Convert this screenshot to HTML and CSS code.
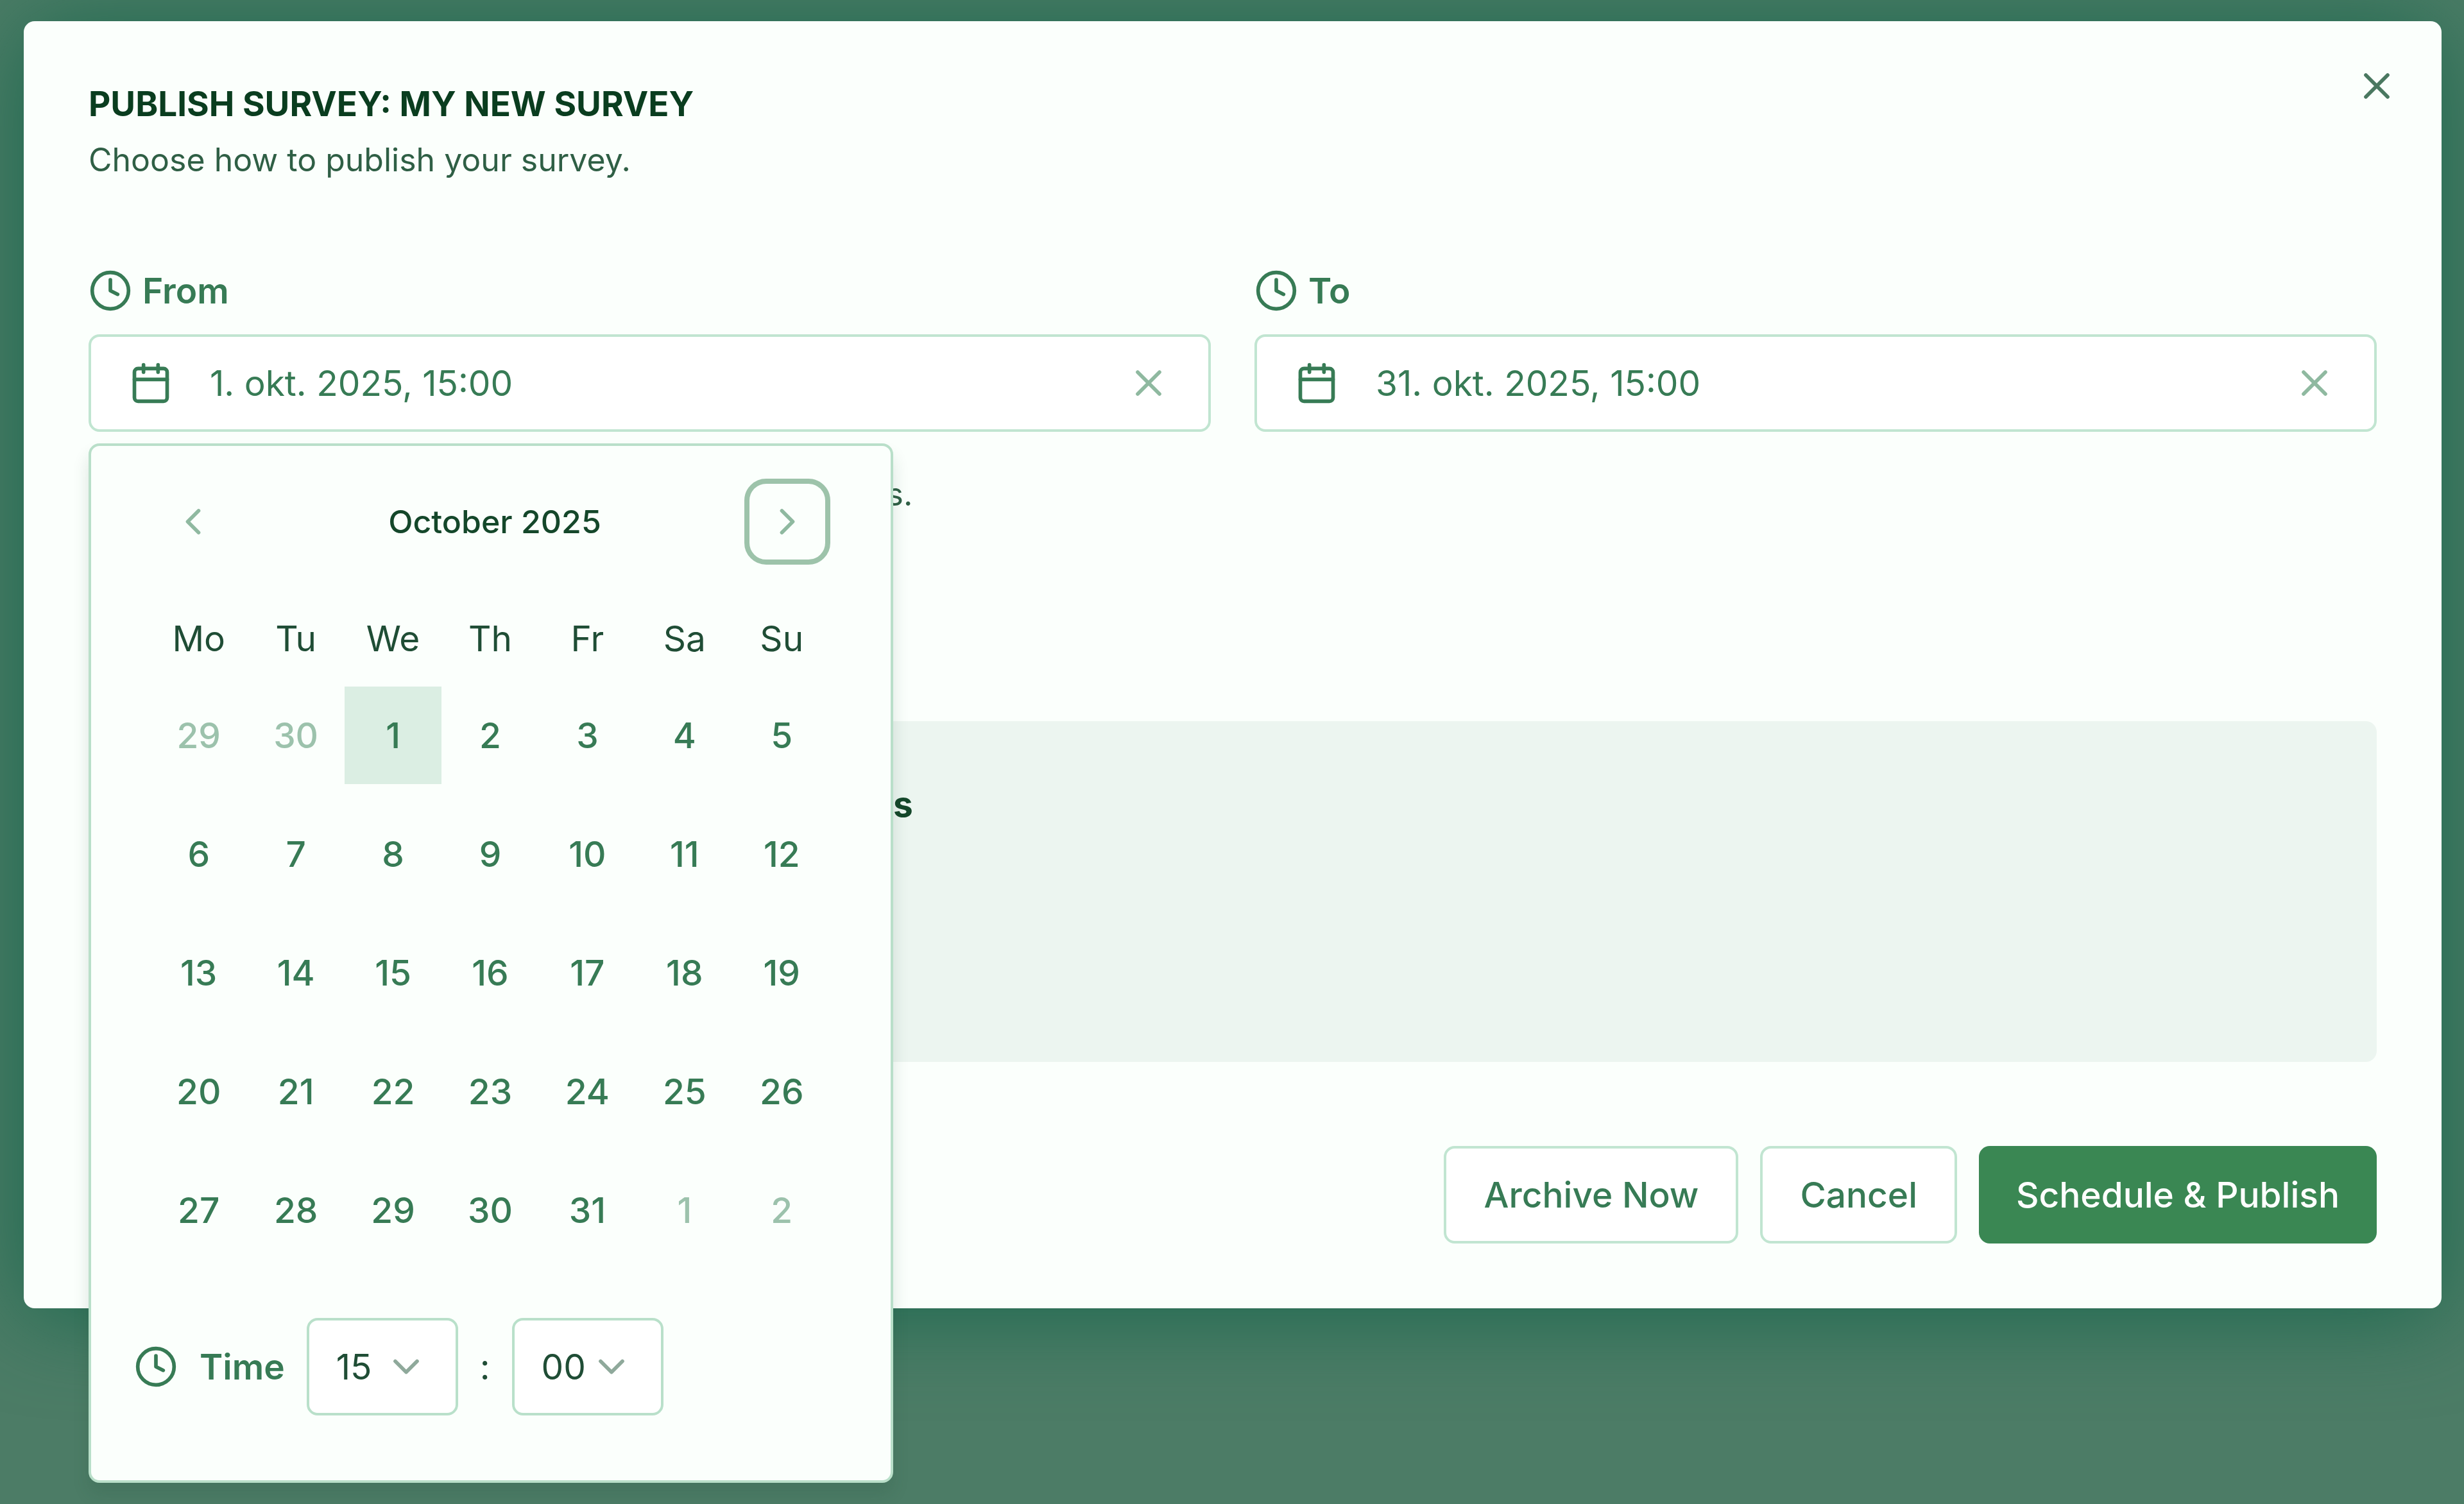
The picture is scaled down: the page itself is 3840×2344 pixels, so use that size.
FILE: index.html
```html
<!DOCTYPE html>
<html lang="en">
<head>
	<meta charset="UTF-8">
	<title>Publish survey</title>
	<link rel="stylesheet" href="styles.css">
</head>
<body>
<!-- shared icons -->
<svg class="sprite" aria-hidden="true">
	<symbol id="clock" viewBox="0 0 24 24"><circle cx="12" cy="12" r="10"/><path d="M12 6v6l4 2"/></symbol>
	<symbol id="calendar" viewBox="0 0 24 24"><path d="M8 2v4M16 2v4M3 10h18"/><rect x="3" y="4" width="18" height="18" rx="2"/></symbol>
	<symbol id="close" viewBox="0 0 24 24"><path d="M18 6 6 18M6 6l12 12"/></symbol>
	<symbol id="left" viewBox="0 0 24 24"><path d="m15 18-6-6 6-6"/></symbol>
	<symbol id="right" viewBox="0 0 24 24"><path d="m9 18 6-6-6-6"/></symbol>
	<symbol id="down" viewBox="0 0 24 24"><path d="m6 9 6 6 6-6"/></symbol>
</svg>

<div class="modal" role="dialog" aria-labelledby="modal-title">
	<button class="modal-close" aria-label="Close"><svg class="icon"><use href="#close"/></svg></button>

	<div class="modal-header">
		<h2 id="modal-title">PUBLISH SURVEY: MY NEW SURVEY</h2>
		<p>Choose how to publish your survey.</p>
	</div>

	<div class="range">
		<div class="field">
			<label for="from"><svg class="icon"><use href="#clock"/></svg>From</label>
			<div class="date-box">
				<svg class="icon"><use href="#calendar"/></svg>
				<input type="text" id="from" value="1. okt. 2025, 15:00">
				<button class="clear" aria-label="Clear from"><svg class="icon"><use href="#close"/></svg></button>
			</div>

			<!-- date picker -->
			<div class="picker">
				<div class="picker-nav">
					<button class="prev" aria-label="Previous month"><svg class="icon"><use href="#left"/></svg></button>
					<span class="month">October 2025</span>
					<button class="next" aria-label="Next month"><svg class="icon"><use href="#right"/></svg></button>
				</div>
				<table class="days">
					<thead>
					<tr><th>Mo</th><th>Tu</th><th>We</th><th>Th</th><th>Fr</th><th>Sa</th><th>Su</th></tr>
					</thead>
					<tbody>
					<tr>
						<td><button class="outside">29</button></td>
						<td><button class="outside">30</button></td>
						<td><button class="selected">1</button></td>
						<td><button>2</button></td>
						<td><button>3</button></td>
						<td><button>4</button></td>
						<td><button>5</button></td>
					</tr>
					<tr>
						<td><button>6</button></td>
						<td><button>7</button></td>
						<td><button>8</button></td>
						<td><button>9</button></td>
						<td><button>10</button></td>
						<td><button>11</button></td>
						<td><button>12</button></td>
					</tr>
					<tr>
						<td><button>13</button></td>
						<td><button>14</button></td>
						<td><button>15</button></td>
						<td><button>16</button></td>
						<td><button>17</button></td>
						<td><button>18</button></td>
						<td><button>19</button></td>
					</tr>
					<tr>
						<td><button>20</button></td>
						<td><button>21</button></td>
						<td><button>22</button></td>
						<td><button>23</button></td>
						<td><button>24</button></td>
						<td><button>25</button></td>
						<td><button>26</button></td>
					</tr>
					<tr>
						<td><button>27</button></td>
						<td><button>28</button></td>
						<td><button>29</button></td>
						<td><button>30</button></td>
						<td><button>31</button></td>
						<td><button class="outside">1</button></td>
						<td><button class="outside">2</button></td>
					</tr>
					</tbody>
				</table>
				<div class="time">
					<label for="hour"><svg class="icon"><use href="#clock"/></svg>Time</label>
					<div class="select">
						<select id="hour"><option>15</option></select>
						<svg class="icon"><use href="#down"/></svg>
					</div>
					<span>:</span>
					<div class="select">
						<select id="minute" aria-label="Minutes"><option>00</option></select>
						<svg class="icon"><use href="#down"/></svg>
					</div>
				</div>
			</div>
		</div>

		<div class="field">
			<label for="to"><svg class="icon"><use href="#clock"/></svg>To</label>
			<div class="date-box">
				<svg class="icon"><use href="#calendar"/></svg>
				<input type="text" id="to" value="31. okt. 2025, 15:00">
				<button class="clear" aria-label="Clear to"><svg class="icon"><use href="#close"/></svg></button>
			</div>
		</div>
	</div>
	<p class="hint">The survey gathers responses between the two dates.</p>

	<div class="summary">
		<h3>Survey schedule and publishing time details</h3>
	</div>

	<div class="modal-footer">
		<button class="btn">Archive Now</button>
		<button class="btn">Cancel</button>
		<button class="btn btn-primary">Schedule &amp; Publish</button>
	</div>
</div>
</body>
</html>
```
FILE: styles.css
```css
* {
	box-sizing: border-box;
}

body {
	margin: 0;
	padding: 33px 35px 33px 37px;
	min-height: 100vh;
	font-family: Inter, "Liberation Sans", sans-serif;
	font-size: 55px;
	line-height: 68px;
	color: #1f4d35;
	background-color: #4c7c66;
}

h2, h3, p {
	margin: 0;
	padding: 0;
}

button, input, select {
	font: inherit;
	color: inherit;
	border: none;
	background: none;
	margin: 0;
	padding: 0;
}

button {
	cursor: pointer;
}

.sprite {
	display: none;
}

.icon {
	display: block;
	flex: none;
	width: 68px;
	height: 68px;
	fill: none;
	stroke: currentColor;
	stroke-width: 2;
	stroke-linecap: round;
	stroke-linejoin: round;
}

.modal {
	position: relative;
	padding: 101px;
	border-radius: 17px;
	background-color: #fbfffc;
	box-shadow: 0 8px 140px rgb(26, 104, 78);
}

.modal-close {
	position: absolute;
	top: 67px;
	right: 67px;
	color: #4a7860;
}

.modal-header h2 {
	margin-bottom: 17px;
	font-size: 53px;
	line-height: 56px;
	font-weight: 700;
	color: #0a3d1f;
}

.modal-header p {
	font-size: 50px;
	line-height: 84px;
	color: #2f5f45;
}

.range {
	display: flex;
	gap: 68px;
	margin-top: 128px;
}

.field {
	position: relative;
	flex: 1;
}

label {
	display: flex;
	align-items: center;
	gap: 16px;
	font-weight: 600;
	color: #377b55;
}

.date-box {
	display: flex;
	align-items: center;
	height: 152px;
	margin-top: 34px;
	padding: 0 59px;
	border: 4px solid #c1e5d1;
	border-radius: 17px;
	color: #377b55;
	background-color: #fff;
}

.date-box input {
	flex: 1;
	min-width: 0;
	padding-left: 58px;
	outline: none;
}

.clear {
	color: #8fb9a0;
}

.hint {
	margin-top: 63px;
	font-size: 50px;
	color: #2f5f45;
}

.summary {
	min-height: 531px;
	margin-top: 320px;
	padding: 99px 101px;
	border-radius: 17px;
	background-color: #ecf5f0;
}

.summary h3 {
	font-size: 55px;
	line-height: 60px;
	font-weight: 700;
	color: #14472a;
}

.modal-footer {
	display: flex;
	justify-content: flex-end;
	gap: 34px;
	margin-top: 131px;
}

.btn {
	height: 152px;
	padding: 0 58px;
	border: 4px solid #c1e5d1;
	border-radius: 17px;
	font-weight: 500;
	color: #377b55;
	background-color: #fff;
}

.btn-primary {
	border: none;
	color: #fff;
	background-color: #3a8753;
}

/* date picker */
.picker {
	position: absolute;
	top: 100%;
	left: 0;
	z-index: 1;
	width: 1254px;
	margin-top: 18px;
	padding: 51px 94px 101px 92px;
	border: 4px solid #b9dfc9;
	border-radius: 17px;
	background-color: #fbfffc;
	box-shadow: 0 18px 26px rgba(30, 70, 50, 0.14);
}

.picker-nav {
	display: flex;
	align-items: center;
	justify-content: space-between;
}

.picker-nav button {
	display: flex;
	align-items: center;
	justify-content: center;
	width: 134px;
	height: 134px;
	border-radius: 34px;
	color: #8fb9a0;
}

.picker-nav .next {
	border: 8px solid #9dc3aa;
}

.month {
	padding-left: 14px;
	font-size: 50px;
	font-weight: 500;
	color: #14472a;
}

.days {
	width: 100%;
	margin-top: 39px;
	border-collapse: collapse;
	table-layout: fixed;
}

.days th {
	height: 151px;
	padding: 0;
	font-weight: 400;
	color: #1f4d35;
}

.days td {
	height: 185px;
	padding: 0 0 33px;
}

.days button {
	display: block;
	width: 100%;
	height: 152px;
	font-weight: 500;
	color: #377b55;
}

.days .outside {
	color: #9cc2ac;
}

.days .selected {
	background-color: #dbeee3;
}

.time {
	display: flex;
	align-items: center;
	gap: 34px;
	margin-top: 59px;
	margin-left: -25px;
}

.time label {
	gap: 34px;
}

.select {
	display: grid;
	align-items: center;
	width: 236px;
	height: 152px;
	border: 4px solid #b9e0ca;
	border-radius: 17px;
	background-color: #fff;
}

/* select and its arrow share one cell */
.select select,
.select .icon {
	grid-area: 1 / 1;
}

.select select {
	width: 100%;
	height: 100%;
	padding-left: 42px;
	appearance: none;
}

.select .icon {
	justify-self: end;
	margin-right: 43px;
	color: #8fa99b;
	pointer-events: none;
}
```
